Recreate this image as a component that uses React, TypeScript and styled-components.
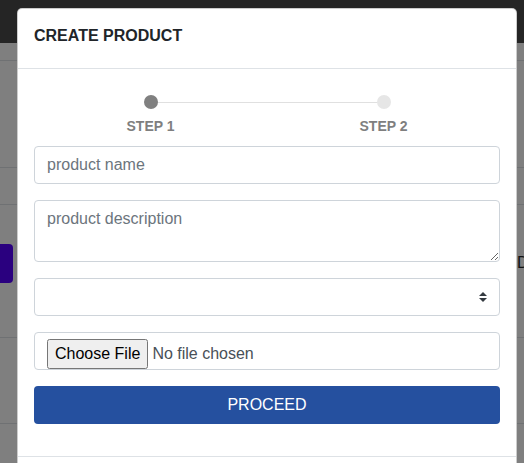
import React from "react";
import styled, { createGlobalStyle } from "styled-components";

const GlobalStyle = createGlobalStyle`
  html, body { margin: 0; padding: 0; overflow: hidden; }
  body {
    font-family: "Liberation Sans", Arial, Helvetica, sans-serif;
    background: #fff;
    color: #212529;
  }
  *, *::before, *::after { box-sizing: border-box; }
`;

const Screen = styled.div`
  position: relative;
  width: 524px;
  height: 463px;
  overflow: hidden;
  background: #fff;
`;

const TopBar = styled.div`
  height: 43px;
  background: #4b4b4b;
`;

const TableRow = styled.div<{ $h: number; $pb?: number }>`
  height: ${(p) => p.$h}px;
  border-bottom: 1px solid #dee2e6;
  display: grid;
  grid-template-columns: 13px 1fr 7px;
  align-items: center;
  padding-bottom: ${(p) => p.$pb ?? 0}px;
`;

const SideButton = styled.div`
  width: 13px;
  height: 39px;
  background: #5500ff;
  border-radius: 0 4px 4px 0;
`;

const EdgeText = styled.span`
  font-size: 16px;
  white-space: nowrap;
  color: #212529;
`;

const Backdrop = styled.div`
  position: absolute;
  inset: 0;
  background: rgba(0, 0, 0, 0.5);
`;

const Modal = styled.div`
  position: absolute;
  top: 8px;
  left: 17px;
  width: 500px;
  background: #fff;
  border: 1px solid rgba(0, 0, 0, 0.2);
  border-radius: 5px;
`;

const ModalHeader = styled.div`
  padding: 16px 16px 22px;
  border-bottom: 1px solid #dee2e6;
`;

const ModalTitle = styled.h5`
  margin: 0;
  font-size: 16px;
  line-height: 21px;
  font-weight: 700;
  color: #212529;
`;

const ModalBody = styled.div`
  padding: 16px 16px 32px;
`;

const ModalFooter = styled.div`
  height: 80px;
  border-top: 1px solid #dee2e6;
`;

const Stepper = styled.div`
  display: grid;
  grid-template-columns: 1fr 1fr;
  padding-top: 10px;
  margin-bottom: 12px;
`;

const Step = styled.div<{ $connector?: boolean }>`
  position: relative;
  display: flex;
  flex-direction: column;
  align-items: center;
  ${(p) =>
    p.$connector
      ? `&::after {
    content: "";
    position: absolute;
    top: 7px;
    left: 50%;
    width: 100%;
    height: 1px;
    background: #e0e0e0;
  }`
      : ""}
`;

const Dot = styled.span<{ $active?: boolean }>`
  position: relative;
  z-index: 1;
  width: 14px;
  height: 14px;
  border-radius: 50%;
  background: ${(p) => (p.$active ? "#808080" : "#e6e6e6")};
`;

const StepLabel = styled.span`
  margin-top: 9px;
  font-size: 14px;
  line-height: 16px;
  font-weight: 700;
  color: #7f7f7f;
`;

const Field = styled.div`
  position: relative;
  margin-bottom: 16px;
`;

const controlCss = `
  display: block;
  width: 100%;
  margin: 0;
  padding: 6px 12px;
  font-family: "Liberation Sans", Arial, Helvetica, sans-serif;
  font-size: 16px;
  line-height: 24px;
  color: #495057;
  background: #fff;
  border: 1px solid #ced4da;
  border-radius: 4px;
  outline: none;
  &::placeholder { color: #6c757d; opacity: 1; }
`;

const TextInput = styled.input`
  ${controlCss}
  height: 38px;
`;

const TextArea = styled.textarea`
  ${controlCss}
  height: 62px;
  resize: vertical;
`;

const Select = styled.select`
  ${controlCss}
  height: 38px;
  appearance: none;
  -webkit-appearance: none;
  padding-right: 28px;
`;

const SelectArrow = styled.svg`
  position: absolute;
  right: 13px;
  top: 14px;
  width: 8px;
  height: 10px;
  pointer-events: none;
`;

const FileInput = styled.input`
  ${controlCss}
  height: 38px;
  overflow: visible;
  &::file-selector-button {
    font-family: "Liberation Sans", Arial, Helvetica, sans-serif;
    font-size: 16px;
    height: 30px;
    padding: 1px 6px;
    margin-right: 4px;
  }
`;

const ProceedButton = styled.button`
  display: block;
  width: 100%;
  height: 38px;
  border: none;
  border-radius: 4px;
  background: #25509f;
  color: #fff;
  font-family: "Liberation Sans", Arial, Helvetica, sans-serif;
  font-size: 16px;
  line-height: 24px;
  text-transform: uppercase;
  cursor: pointer;
`;

export default function App() {
  return (
    <>
      <GlobalStyle />
      <Screen>
        <TopBar />
        <TableRow $h={18} />
        <TableRow $h={107} />
        <TableRow $h={37} />
        <TableRow $h={133} $pb={16}>
          <SideButton />
          <span />
          <EdgeText>Delete</EdgeText>
        </TableRow>
        <TableRow $h={86} />
        <TableRow $h={60} />
        <Backdrop />
        <Modal>
          <ModalHeader>
            <ModalTitle>CREATE PRODUCT</ModalTitle>
          </ModalHeader>
          <ModalBody>
            <Stepper>
              <Step $connector>
                <Dot $active />
                <StepLabel>STEP 1</StepLabel>
              </Step>
              <Step>
                <Dot />
                <StepLabel>STEP 2</StepLabel>
              </Step>
            </Stepper>
            <Field>
              <TextInput placeholder="product name" />
            </Field>
            <Field>
              <TextArea placeholder="product description" rows={2} />
            </Field>
            <Field>
              <Select defaultValue="">
                <option value="" />
              </Select>
              <SelectArrow viewBox="0 0 4 5">
                <path fill="#343a40" d="M2 0L0 2h4zm0 5L0 3h4z" />
              </SelectArrow>
            </Field>
            <Field>
              <FileInput type="file" />
            </Field>
            <ProceedButton type="button">Proceed</ProceedButton>
          </ModalBody>
          <ModalFooter />
        </Modal>
      </Screen>
    </>
  );
}
